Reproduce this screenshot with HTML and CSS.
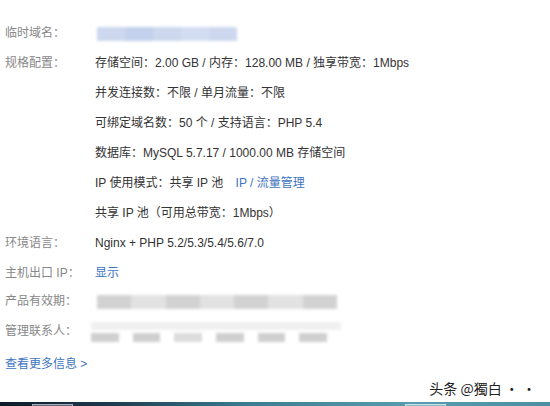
FILE: index.html
```html
<!DOCTYPE html>
<html lang="zh">
<head>
<meta charset="utf-8">
<link rel="stylesheet" href="styles.css">
</head>
<body>
<div class="page">
  <div class="info">
    <div class="row"><div class="label">临时域名：</div><div class="value"><span class="blur blur-blue"><i></i><i></i><i></i><i></i><i></i></span></div></div>
    <div class="row"><div class="label">规格配置：</div><div class="value">存储空间：2.00 GB / 内存：128.00 MB / 独享带宽：1Mbps</div></div>
    <div class="row"><div class="label"></div><div class="value">并发连接数：不限 / 单月流量：不限</div></div>
    <div class="row"><div class="label"></div><div class="value">可绑定域名数：50 个 / 支持语言：PHP 5.4</div></div>
    <div class="row"><div class="label"></div><div class="value">数据库：MySQL 5.7.17 / 1000.00 MB 存储空间</div></div>
    <div class="row"><div class="label"></div><div class="value">IP 使用模式：共享 IP 池 <a class="link gap">IP / 流量管理</a></div></div>
    <div class="row"><div class="label"></div><div class="value">共享 IP 池（可用总带宽：1Mbps）</div></div>
    <div class="row"><div class="label">环境语言：</div><div class="value">Nginx + PHP 5.2/5.3/5.4/5.6/7.0</div></div>
    <div class="row short"><div class="label">主机出口 IP：</div><div class="value"><a class="link">显示</a></div></div>
    <div class="row"><div class="label">产品有效期：</div><div class="value"><span class="blur blur-gray wide"><i></i><i></i><i></i><i></i><i></i><i></i><i></i></span></div></div>
    <div class="row"><div class="label">管理联系人：</div><div class="value"><span class="blur blur-gray2"><i></i><i></i><i></i><i></i><i></i><i></i></span></div></div>
    <div class="more"><a class="link">查看更多信息 &gt;</a></div>
  </div>
  <div class="watermark">头条 @獨白 · ·</div>
  <div class="taskbar"><span class="tb-item"></span><span class="tb-item light"></span></div>
</div>
</body>
</html>
```
FILE: styles.css
```css
html, body {
  margin: 0;
  padding: 0;
  background: #fff;
}
.page {
  width: 550px;
  height: 406px;
  display: flex;
  flex-direction: column;
  font-family: "Liberation Sans", "Noto Sans CJK SC", sans-serif;
  font-size: 12px;
  color: #333;
  overflow: hidden;
}
.info {
  padding: 18px 0 0 5px;
  display: flex;
  flex-direction: column;
}
.row {
  display: grid;
  grid-template-columns: 90px 1fr;
  height: 30px;
  line-height: 30px;
}
.row.short {
  height: 28px;
}
.label {
  color: #888;
}
.value {
  color: #333;
}
.link {
  color: #3d74c2;
}
.gap {
  margin-left: 9px;
}
.more {
  margin-top: 3px;
  height: 30px;
  line-height: 30px;
}
.blur {
  display: inline-flex;
  vertical-align: middle;
  height: 14px;
  filter: blur(1.5px);
}
.blur i {
  display: block;
  flex: 1;
}
.blur-blue {
  width: 140px;
  margin-left: 2px;
}
.blur-blue i { background: #cdd8ee; }
.blur-blue i:nth-child(2) { background: #c3d1ec; }
.blur-blue i:nth-child(4) { background: #d3ddf1; }
.blur-gray {
  width: 240px;
  margin-left: 2px;
}
.blur-gray i { background: #d2d2d2; }
.blur-gray i:nth-child(2n) { background: #e2e2e2; }
.blur-gray2 {
  width: 250px;
  height: 20px;
  margin-left: -4px;
  background: linear-gradient(#f0f0f0 0 40%, transparent 40%);
}
.blur-gray2 i { background: linear-gradient(transparent 55%, #cfcfcf 55%); margin-right: 14px; }
.blur-gray2 i:nth-child(3) { background: linear-gradient(transparent 55%, #dcdcdc 55%); }
.watermark {
  margin-top: auto;
  align-self: flex-end;
  margin-right: 14px;
  font-family: "Noto Sans CJK SC", sans-serif;
  font-size: 14px;
  color: #222;
  line-height: 18px;
  margin-bottom: 5px;
}
.taskbar {
  height: 10px;
  background: linear-gradient(90deg, #0d1b2a 0%, #1e3a4e 20%, #3a7d92 45%, #5a9cae 75%, #4c8ea2 100%);
  position: relative;
  flex: none;
}
.tb-item {
  position: absolute;
  top: 2px;
  left: 32px;
  width: 41px;
  height: 8px;
  background: #5b6a78;
  border: 1px solid #aab;
  box-sizing: border-box;
}
.tb-item.light {
  left: 405px;
  background: #8ab8c6;
  border-color: #c8e0e8;
}
```
